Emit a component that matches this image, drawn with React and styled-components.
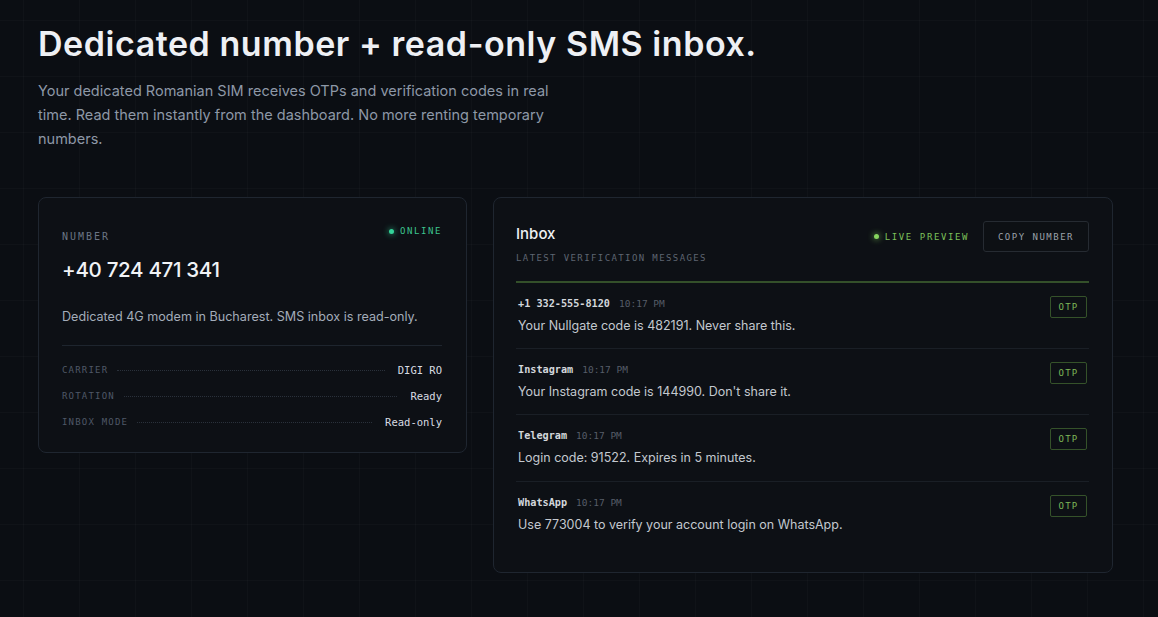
import React from "react";
import styled, { createGlobalStyle } from "styled-components";

const Global = createGlobalStyle`
  html, body { margin: 0; padding: 0; }
  body {
    background-color: #0b0e13;
    background-image:
      linear-gradient(rgba(255,255,255,0.018) 1px, transparent 1px),
      linear-gradient(90deg, rgba(255,255,255,0.018) 1px, transparent 1px);
    background-size: 56px 56px;
    background-position: 23px 20px;
    min-height: 617px;
    font-family: Inter, "Noto Sans", sans-serif;
    -webkit-font-smoothing: antialiased;
  }
  * { box-sizing: border-box; }
`;

const mono = `"DejaVu Sans Mono", "Liberation Mono", monospace`;

const Page = styled.main`
  padding: 22px 45px 0 38px;
  width: 1158px;
`;

const Title = styled.h1`
  margin: 0;
  font-family: Inter, sans-serif;
  font-weight: 600;
  font-size: 34px;
  line-height: 44px;
  letter-spacing: 0.55px;
  color: #eef0f4;
`;

const Lead = styled.p`
  margin: 13px 0 0;
  width: 520px;
  font-size: 14.5px;
  line-height: 24px;
  color: #8e98a7;
`;

const Grid = styled.section`
  margin-top: 46px;
  display: grid;
  grid-template-columns: 429px 620px;
  gap: 26px;
  align-items: start;
`;

const Card = styled.div`
  align-self: start;
  background: #0d1015;
  border: 1px solid #1f2630;
  border-radius: 8px;
  padding: ${(p) => p.$pad || "23px"};
`;

const TopRow = styled.div`
  display: flex;
  justify-content: space-between;
  align-items: flex-start;
`;

const Label = styled.div`
  font-family: ${mono};
  font-size: ${(p) => p.$size || "10px"};
  letter-spacing: ${(p) => p.$ls || "2px"};
  line-height: 12px;
  color: ${(p) => p.$color || "#6b7584"};
  text-transform: uppercase;
  margin-top: ${(p) => p.$mt || "0"};
`;

const Status = styled.div`
  display: flex;
  align-items: center;
  gap: 6px;
  font-family: ${mono};
  font-size: 9px;
  line-height: 12px;
  letter-spacing: 1.6px;
  color: ${(p) => p.$color};
  margin-top: ${(p) => p.$mt || "0"};
`;

const Dot = styled.span`
  width: 5px;
  height: 5px;
  border-radius: 50%;
  background: ${(p) => p.$color};
  box-shadow: 0 0 6px ${(p) => p.$color};
`;

const PhoneNumber = styled.div`
  margin-top: 15px;
  font-size: 20.5px;
  line-height: 24px;
  font-weight: 500;
  letter-spacing: -0.3px;
  color: #f1f3f6;
`;

const Desc = styled.p`
  margin: 26px 0 0;
  font-size: 12.6px;
  color: #a3acb9;
  line-height: 18px;
`;

const Divider = styled.div`
  margin: 19px 0 17px;
  height: 1px;
  background: #1e252e;
`;

const Specs = styled.div`
  display: flex;
  flex-direction: column;
  gap: 12px;
`;

const Spec = styled.div`
  display: flex;
  align-items: center;
  gap: 9px;
  height: 14px;
`;

const SpecKey = styled.span`
  font-family: ${mono};
  font-size: 9px;
  letter-spacing: 1.2px;
  color: #4f5867;
`;

const Leader = styled.span`
  flex: 1;
  height: 0;
  border-top: 1px dotted #2a313b;
  margin-right: 4px;
`;

const SpecVal = styled.span`
  font-family: ${mono};
  font-size: 10.5px;
  color: #d8dce2;
`;

const InboxHead = styled.div`
  display: flex;
  justify-content: space-between;
  align-items: flex-start;
  padding-bottom: 17px;
  border-bottom: 2px solid #34502a;
`;

const InboxTitle = styled.div`
  font-size: 15px;
  font-weight: 500;
  color: #eef0f3;
  line-height: 22px;
  margin-top: 2px;
`;

const HeadRight = styled.div`
  display: flex;
  align-items: center;
  gap: 14px;
`;

const CopyBtn = styled.button`
  height: 31px;
  width: 106px;
  padding: 0;
  background: #0d1014;
  border: 1px solid #262b32;
  border-radius: 3px;
  font-family: ${mono};
  font-size: 9px;
  letter-spacing: 1.5px;
  color: #9ba1a9;
`;

const Msg = styled.div`
  display: flex;
  justify-content: space-between;
  align-items: flex-start;
  padding: 14px 2px ${(p) => (p.$last ? "38px" : "0")} 2px;
  height: ${(p) => (p.$last ? "auto" : "66.2px")};
  border-bottom: ${(p) => (p.$last ? "none" : "1px solid #1a1f26")};
`;

const MsgMeta = styled.div`
  display: flex;
  align-items: baseline;
  gap: 9px;
  font-family: ${mono};
  line-height: 14px;
`;

const Sender = styled.span`
  font-size: 10.2px;
  font-weight: 700;
  color: #d3d7dc;
`;

const Time = styled.span`
  font-size: 9.5px;
  color: #565d68;
`;

const MsgText = styled.div`
  margin-top: 6px;
  font-size: 12.5px;
  line-height: 18px;
  color: #c3c8cf;
`;

const Otp = styled.span`
  margin-top: -1px;
  width: 37px;
  height: 22px;
  display: flex;
  align-items: center;
  justify-content: center;
  border: 1px solid #35522a;
  border-radius: 2px;
  font-family: ${mono};
  font-size: 9px;
  letter-spacing: 1.2px;
  color: #7db657;
`;

const messages = [
  { from: "+1 332-555-8120", text: "Your Nullgate code is 482191. Never share this." },
  { from: "Instagram", text: "Your Instagram code is 144990. Don't share it." },
  { from: "Telegram", text: "Login code: 91522. Expires in 5 minutes." },
  { from: "WhatsApp", text: "Use 773004 to verify your account login on WhatsApp." },
];

const specs = [
  ["CARRIER", "DIGI RO"],
  ["ROTATION", "Ready"],
  ["INBOX MODE", "Read-only"],
];

export default function App() {
  return (
    <>
      <Global />
      <Page>
        <Title>Dedicated number + read-only SMS inbox.</Title>
        <Lead>
          Your dedicated Romanian SIM receives OTPs and verification codes in real time. Read them
          instantly from the dashboard. No more renting temporary numbers.
        </Lead>
        <Grid>
          <Card $pad="28px 24px 23px 23px">
            <TopRow>
              <Label $mt="5px">NUMBER</Label>
              <Status $color="#3cc48e" $mt="-1px">
                <Dot $color="#34d399" />
                ONLINE
              </Status>
            </TopRow>
            <PhoneNumber>+40 724 471 341</PhoneNumber>
            <Desc>Dedicated 4G modem in Bucharest. SMS inbox is read-only.</Desc>
            <Divider />
            <Specs>
              {specs.map(([k, v]) => (
                <Spec key={k}>
                  <SpecKey>{k}</SpecKey>
                  <Leader />
                  <SpecVal>{v}</SpecVal>
                </Spec>
              ))}
            </Specs>
          </Card>
          <Card $pad="23px 23px 0 22px">
            <InboxHead>
              <div>
                <InboxTitle>Inbox</InboxTitle>
                <Label $color="#5e6571" $mt="7px" $size="9px" $ls="1.4px">
                  LATEST VERIFICATION MESSAGES
                </Label>
              </div>
              <HeadRight>
                <Status $color="#7cc05a">
                  <Dot $color="#86d45e" />
                  LIVE PREVIEW
                </Status>
                <CopyBtn>COPY NUMBER</CopyBtn>
              </HeadRight>
            </InboxHead>
            {messages.map((m, i) => (
              <Msg key={m.from} $last={i === messages.length - 1}>
                <div>
                  <MsgMeta>
                    <Sender>{m.from}</Sender>
                    <Time>10:17 PM</Time>
                  </MsgMeta>
                  <MsgText>{m.text}</MsgText>
                </div>
                <Otp>OTP</Otp>
              </Msg>
            ))}
          </Card>
        </Grid>
      </Page>
    </>
  );
}
